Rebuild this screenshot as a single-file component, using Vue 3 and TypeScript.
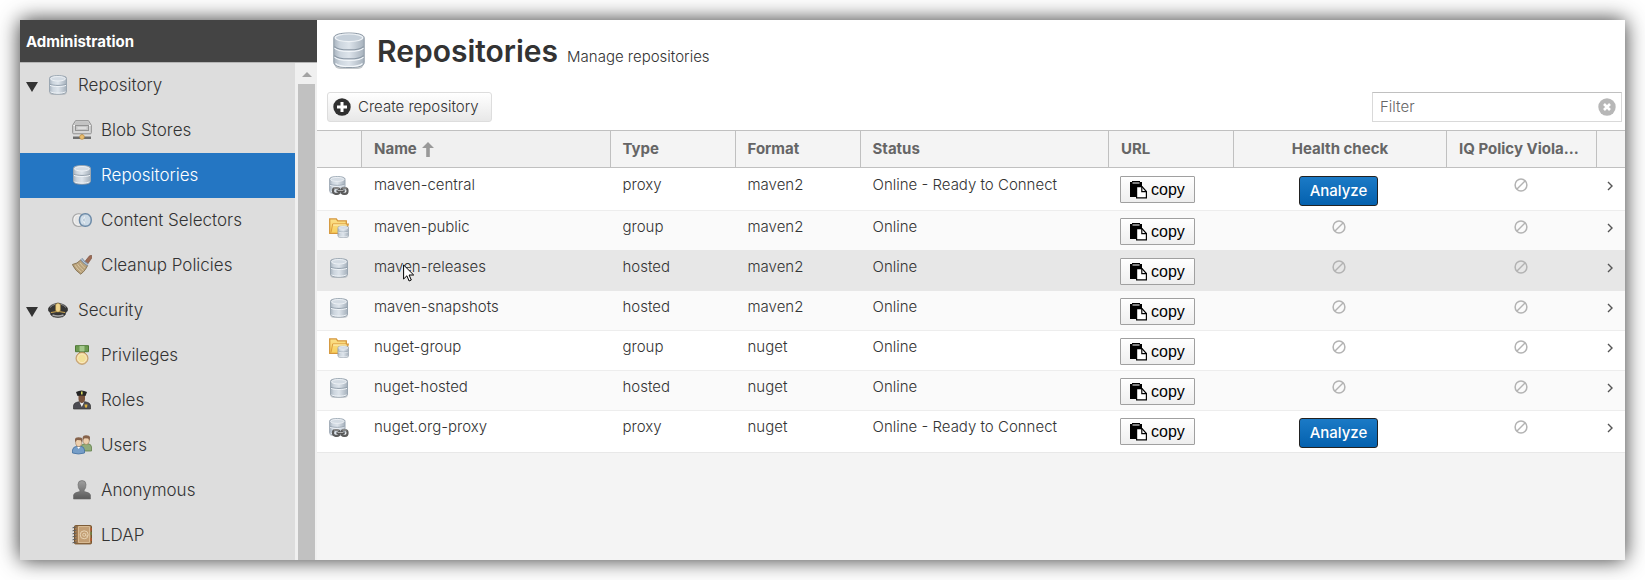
<script setup lang="ts">
import { ref } from 'vue'

interface NavItem {
  label: string
  icon: string
  group?: boolean
}

interface Repo {
  name: string
  type: 'proxy' | 'group' | 'hosted'
  format: string
  status: string
  analyze?: boolean
}

const nav: NavItem[] = [
  { label: 'Repository', icon: 'database', group: true },
  { label: 'Blob Stores', icon: 'drive' },
  { label: 'Repositories', icon: 'database' },
  { label: 'Content Selectors', icon: 'selectors' },
  { label: 'Cleanup Policies', icon: 'broom' },
  { label: 'Security', icon: 'cap', group: true },
  { label: 'Privileges', icon: 'medal' },
  { label: 'Roles', icon: 'officer' },
  { label: 'Users', icon: 'users' },
  { label: 'Anonymous', icon: 'person' },
  { label: 'LDAP', icon: 'book' },
]

const repos: Repo[] = [
  { name: 'maven-central', type: 'proxy', format: 'maven2', status: 'Online - Ready to Connect', analyze: true },
  { name: 'maven-public', type: 'group', format: 'maven2', status: 'Online' },
  { name: 'maven-releases', type: 'hosted', format: 'maven2', status: 'Online' },
  { name: 'maven-snapshots', type: 'hosted', format: 'maven2', status: 'Online' },
  { name: 'nuget-group', type: 'group', format: 'nuget', status: 'Online' },
  { name: 'nuget-hosted', type: 'hosted', format: 'nuget', status: 'Online' },
  { name: 'nuget.org-proxy', type: 'proxy', format: 'nuget', status: 'Online - Ready to Connect', analyze: true },
]

const selected = ref('Repositories')
const hovered = 'maven-releases'
const filter = ref('')
</script>

<template>
  <svg class="defs" aria-hidden="true">
    <defs>
      <linearGradient id="steel" x1="0" x2="1" y1="0" y2="0">
        <stop offset="0" stop-color="#a9b4bf" />
        <stop offset=".2" stop-color="#ccd5de" />
        <stop offset=".5" stop-color="#dde4eb" />
        <stop offset="1" stop-color="#a6b1bc" />
      </linearGradient>
      <linearGradient id="folder" x1="0" x2="0" y1="0" y2="1">
        <stop offset="0" stop-color="#fbe08a" />
        <stop offset="1" stop-color="#f8cf5c" />
      </linearGradient>
      <linearGradient id="shade" x1="0" x2="0" y1="0" y2="1">
        <stop offset="0" stop-color="#a0a0a0" />
        <stop offset="1" stop-color="#5a5a5a" />
      </linearGradient>
      <symbol id="database" viewBox="0 0 20 20">
        <rect x="1" y="1" width="18" height="19" rx="4" fill="#6b7783" opacity=".3" />
        <path d="M1.500 3.500C1.500 1.500 5 .6 10 .6s8.500.9 8.500 2.900v12.600c0 2-3.500 3-8.500 3s-8.500-1-8.500-3z" fill="url(#steel)" stroke="#9ba7b2" />
        <ellipse cx="10" cy="3.800" rx="7.500" ry="2.200" fill="#d3dbe3" stroke="#edf1f5" />
        <path d="M2 9.200c2 1.600 14 1.600 16 0" fill="none" stroke="#919eab" />
        <path d="M2 10.300c2 1.600 14 1.600 16 0M2.500 16.800c3 1.800 12 1.800 15 0" fill="none" stroke="#f0f4f8" />
      </symbol>
      <symbol id="hosted" viewBox="0 0 20 20"><use href="#database" /></symbol>
      <symbol id="database-large" viewBox="0 0 32 38">
        <rect x="1" y="3" width="30" height="34" rx="6" fill="#55606b" opacity=".35" />
        <path d="M.8 6C.8 2.500 7 1 16 1s15.200 1.500 15.200 5v24.500c0 3.500-6 5-15.200 5S.8 34 .8 30.500z" fill="url(#steel)" stroke="#8e9aa6" />
        <ellipse cx="16" cy="5.800" rx="13.800" ry="3.800" fill="#c6d0da" stroke="#eef2f6" stroke-width="1.200" />
        <path d="M1.500 14.500c3 4.500 26 4.500 29 0M1.500 23.500c3 4.500 26 4.500 29 0" fill="none" stroke="#8a97a4" stroke-width="1.200" />
        <path d="M1.500 16c3 4.500 26 4.500 29 0M1.500 25c3 4.500 26 4.500 29 0M2.500 31.500c4 4 23 4 27 0" fill="none" stroke="#f3f7fa" stroke-width="1.200" />
      </symbol>
      <symbol id="drive" viewBox="0 0 20 20">
        <path d="M3.500.7h13l2.800 4.500v7.600q0 1-1 1H1.700q-1 0-1-1V5.200z" fill="#d7d7d7" stroke="#8e8e8e" />
        <path d="M4 1.500h12l2 3.500H2z" fill="#c3c3c3" />
        <path d="M1.500 5.500h17" stroke="#fafafa" />
        <rect x="3.500" y="5.500" width="13" height="5" fill="#c6c6c6" stroke="#939393" />
        <path d="M5.500 8h9" stroke="#f4f4f4" />
        <path d="M9 14h2v3H9z" fill="#929292" />
        <path d="M1 16.500h18v2.500H1z" fill="#6e6e6e" />
        <circle cx="10" cy="17" r="2.400" fill="#e9bd70" stroke="#b98a3d" stroke-width=".6" />
      </symbol>
      <symbol id="selectors" viewBox="0 0 20 20">
        <rect x=".8" y="3.800" width="12" height="12.500" rx="5.500" fill="#e6e6e6" stroke="#a6a6a6" stroke-width="1.300" />
        <rect x="2" y="5" width="9.600" height="10.100" rx="4.500" fill="none" stroke="#f7f7f7" stroke-width=".8" />
        <rect x="7.500" y="3.800" width="11.700" height="12.500" rx="5.500" fill="#c5d8e8" fill-opacity=".75" stroke="#6d8ba8" stroke-width="1.500" />
        <path d="M12.300 6.500q1.500 3.500 0 7-3-3.500 0-7z" fill="#9bb1c5" stroke="#f2f7fb" stroke-width=".8" />
      </symbol>
      <symbol id="broom" viewBox="0 0 20 20">
        <path d="M17.500.8l2.200-.5.200 2.500-4.400 6.500-3-2.300z" fill="#9d6b54" stroke="#734c3b" stroke-width=".6" />
        <path d="M8.700 5q1.600 2.500 7 5.500l-1.800 3.200q-2.200 3.300-5.200 5.500Q3 15.500.3 9.500q5-.8 8.400-4.500z" fill="#b9a27c" stroke="#7b6848" stroke-width=".8" />
        <path d="M3 10.200q3 4.500 6.500 7M5.500 9.200q2.500 4 6 6.300M8 7.700q2 3.500 5 5.500" fill="none" stroke="#e1cfab" stroke-width=".8" />
        <path d="M9.300 3.800q2.500 4 6.500 6" fill="none" stroke="#8194a8" stroke-width="2.600" />
        <path d="M9.300 3.800q2.500 4 6.500 6" fill="none" stroke="#d4dde6" stroke-width=".8" />
      </symbol>
      <symbol id="cap" viewBox="0 0 20 20">
        <path d="M.3 9Q1.500 4.500 10 3q8.500 1.500 9.700 6 .3 2.500-2.300 4v1.500q-1.700 3-7.400 3t-7.400-3V13Q0 11.500.3 9z" fill="#363636" stroke="#1c1c1c" stroke-width=".5" />
        <path d="M2 7.500q2-2.500 5.500-3.300M12.500 4.200Q16 5 18 7.500" fill="none" stroke="#8b8b8b" />
        <path d="M3 12.500q7-2.200 14 0" fill="none" stroke="#d0a951" />
        <path d="M4.500 15q5.500 2 11 0" fill="none" stroke="#aaa" stroke-width="1.500" />
        <path d="M7.600 4.500L10 3l2.400 1.500v6L10 12.300l-2.400-1.800z" fill="#efd48d" stroke="#9e7c30" stroke-width=".5" />
      </symbol>
      <symbol id="medal" viewBox="0 0 20 20">
        <path d="M3.500.7h13v6h-13z" fill="#6d9a50" stroke="#4e7934" />
        <path d="M7.500 1h5v6h-5z" fill="#a3c78a" />
        <path d="M7 6.500h6v2H7z" fill="#496c38" />
        <circle cx="10" cy="13.300" r="6" fill="#e6c591" stroke="#b9935b" stroke-width=".9" />
        <circle cx="10" cy="13.300" r="4.400" fill="#f2e099" stroke="#fff1cb" stroke-width=".8" />
      </symbol>
      <symbol id="officer" viewBox="0 0 20 20">
        <path d="M1.500 19v-3.500Q2 12.500 7 11.800h6q5 .7 5.500 3.700V19z" fill="#4c4c52" stroke="#333" stroke-width=".7" />
        <path d="M6.500 5h6.500v4q0 3-3.200 4-3.300-1-3.300-4z" fill="#79533d" />
        <path d="M7.500 12l2.300 5 2.400-5-2.400 1.200z" fill="#f2f2f2" />
        <path d="M4 2q5.500-3 11 0l-1.500 4q-4-1.200-8 0z" fill="#252525" />
        <path d="M9 1.500h1.600v3H9z" fill="#d4d35d" />
        <path d="M12.500 14.500h3l-.4 2.500-1.100 1-1.100-1z" fill="#dcb13f" />
      </symbol>
      <symbol id="users" viewBox="0 0 20 20">
        <path d="M9 16v-4q.5-3 4-3.300h3q3.300.5 3.500 3.300v4z" fill="#91ab7a" stroke="#62814b" stroke-width=".8" />
        <path d="M11.200 2.500h6v4q-.5 3-3 3t-3-3z" fill="#eed0ae" stroke="#8c6a4a" stroke-width=".5" />
        <path d="M10.800 5V2q.2-1.600 3.200-1.700 3.800 0 4 2.200l-.3 3.500-1.500-2.500-3.500-.2z" fill="#86624a" />
        <path d="M.5 18v-3q.5-3.300 4.300-3.700h4q3.400.4 3.700 3.700v3q-6 2-12 0z" fill="#769ec8" stroke="#426f9e" stroke-width=".8" />
        <path d="M3.700 4.500h6v4.200q-.5 3-3 3t-3-3z" fill="#eed0ae" stroke="#8c6a4a" stroke-width=".5" />
        <path d="M3 7.300V4.200q.2-1.900 3.500-2 3.800 0 4 2.300l-.3 3-1.500-2.200-3.700-.3z" fill="#86624a" />
        <path d="M5.200 12l1.500 2 1.500-2z" fill="#fff" />
      </symbol>
      <symbol id="person" viewBox="0 0 20 20">
        <path d="M6 4.500Q6 .5 10 .5t4 4q0 4-1.800 5.600v1.500q5.800 1 6.300 3.400v4h-17v-4q.5-2.400 6.300-3.400v-1.500Q6 8.500 6 4.500z" fill="url(#shade)" stroke="#6a6a6a" stroke-width=".6" />
      </symbol>
      <symbol id="book" viewBox="0 0 20 20">
        <rect x="2.500" y=".6" width="17" height="18.300" rx="1" fill="#a27a4f" stroke="#77542e" />
        <path d="M6.500 1.500h11v16h-11z" fill="#c39f75" stroke="#e2c7a0" stroke-width=".8" />
        <circle cx="12.200" cy="9.800" r="4" fill="none" stroke="#e8d3b3" />
        <circle cx="12.200" cy="9.800" r="1.500" fill="none" stroke="#e8d3b3" stroke-width=".9" />
        <path d="M13.700 8.500v2.200q1.300 1.300 2.400-.5" fill="none" stroke="#e8d3b3" stroke-width=".8" />
        <path d="M.5 2.800l4-.8M.5 5.800l4-.8M.5 8.800l4-.8M.5 11.800l4-.8M.5 14.800l4-.8M.5 17.800l4-.8" stroke="#5d5d5d" />
        <path d="M19 3v2.500M19 13v3" stroke="#c2572c" stroke-width="1.200" />
        <path d="M19 7v3" stroke="#6b8d4b" stroke-width="1.200" />
      </symbol>
      <symbol id="proxy" viewBox="0 0 20 20">
        <use href="#database" width="18" height="18" x="-.7" />
        <rect x="4" y="12" width="6.500" height="5.800" rx="2.500" fill="none" stroke="#5c5c5c" stroke-width="2.200" />
        <rect x="12.500" y="12" width="6" height="5.800" rx="2.500" fill="none" stroke="#5c5c5c" stroke-width="2.200" />
        <path d="M5 12h5M13.500 12h4" stroke="#bbb" stroke-width=".9" />
        <path d="M7.500 14.900h8" stroke="#4c4c4c" stroke-width="2.400" />
        <path d="M8.500 14.600h6" stroke="#c8c8c8" stroke-width=".9" />
      </symbol>
      <symbol id="group" viewBox="0 0 20 20">
        <path d="M.7 15.300V.9h6.600l1.400 1.900h8.600v3.400h1.900l-2.400 9.100z" fill="url(#folder)" stroke="#d5973c" stroke-width="1.300" />
        <path d="M2 14.500l1.700-8.600h14" fill="none" stroke="#dc9d40" />
        <path d="M4.200 7h13" stroke="#fdf0bd" />
        <use href="#database" x="8" y="7.500" width="12.500" height="12.500" />
      </symbol>
      <symbol id="none" viewBox="0 0 14 14">
        <circle cx="7" cy="7" r="5.900" fill="none" stroke="currentColor" stroke-width="1.500" />
        <path d="M3 11l8-8" stroke="currentColor" stroke-width="1.500" />
      </symbol>
      <symbol id="paste" viewBox="0 0 18 18">
        <path d="M0 1h2V0h8v1h2v4H6v11H0z" fill="#000" />
        <path d="M2.500 2h7" stroke="#fff" />
        <path d="M6.600 5.600h5.400l4.400 4.900v6.400H6.600z" fill="#fff" stroke="#000" stroke-width="1.200" />
        <path d="M11.800 5.600v5.100h4.600" fill="none" stroke="#000" stroke-width="1.200" />
      </symbol>
    </defs>
  </svg>

  <div class="window">
    <aside class="sidebar">
      <h2 class="side-title">Administration</h2>
      <div class="side-body">
        <nav class="tree" aria-label="Administration">
          <a
            v-for="item in nav"
            :key="item.label"
            href="#"
            class="node"
            :class="{ group: item.group, active: item.label === selected }"
            @click.prevent="selected = item.label"
          >
            <svg v-if="item.group" class="toggle" viewBox="0 0 12 10"><path d="M0 0h12L6 10z" fill="#333" /></svg>
            <svg class="icon"><use :href="'#' + item.icon" /></svg>
            <span>{{ item.label }}</span>
          </a>
        </nav>
        <div class="scrollbar" aria-hidden="true">
          <svg class="up" viewBox="0 0 10 5"><path d="M5 0l5 5H0z" fill="#a3a3a3" /></svg>
          <div class="thumb"></div>
        </div>
      </div>
    </aside>

    <main class="main">
      <header class="head">
        <svg class="head-icon"><use href="#database-large" /></svg>
        <div class="head-text">
          <h1>Repositories</h1>
          <span>Manage repositories</span>
        </div>
      </header>

      <div class="toolbar">
        <button type="button" class="create">
          <svg viewBox="0 0 18 18">
            <circle cx="9" cy="9" r="8.700" fill="#2f2f2f" />
            <path d="M9 4v10M4 9h10" stroke="#fff" stroke-width="3" />
          </svg>
          Create repository
        </button>
        <div class="filter">
          <input v-model="filter" type="text" placeholder="Filter" aria-label="Filter" />
          <button type="button" aria-label="Clear filter" @click="filter = ''">
            <svg viewBox="0 0 18 18">
              <circle cx="9" cy="9" r="8.700" fill="#b7b7b7" />
              <path d="M6 6l6 6M12 6l-6 6" stroke="#fff" stroke-width="2.600" />
            </svg>
          </button>
        </div>
      </div>

      <table class="grid">
        <colgroup>
          <col class="c-icon" />
          <col class="c-name" />
          <col class="c-small" />
          <col class="c-small" />
          <col />
          <col class="c-small" />
          <col class="c-health" />
          <col class="c-iq" />
          <col class="c-go" />
        </colgroup>
        <thead>
          <tr>
            <th></th>
            <th class="sorted" aria-sort="ascending">
              Name
              <svg class="sort" viewBox="0 0 12 15"><path d="M6 0l6 6H7.800v9H4.200V6H0z" fill="#999" /></svg>
            </th>
            <th>Type</th>
            <th>Format</th>
            <th>Status</th>
            <th>URL</th>
            <th class="center">Health check</th>
            <th>IQ Policy Viola...</th>
            <th></th>
          </tr>
        </thead>
        <tbody>
          <tr v-for="repo in repos" :key="repo.name" :class="{ hover: repo.name === hovered, tall: repo.analyze }">
            <td class="pic"><svg class="icon"><use :href="'#' + repo.type" /></svg></td>
            <td>
              <span class="name">
                {{ repo.name }}
                <svg v-if="repo.name === hovered" class="cursor" viewBox="0 0 12 18" aria-hidden="true">
                  <path d="M.6 1v14l3.300-3.200 2.200 5.200 2.200-1-2.200-5h4.600z" fill="#fff" stroke="#000" />
                </svg>
              </span>
            </td>
            <td>{{ repo.type }}</td>
            <td>{{ repo.format }}</td>
            <td>{{ repo.status }}</td>
            <td class="action">
              <button type="button" class="copy"><svg viewBox="0 0 18 18"><use href="#paste" /></svg>copy</button>
            </td>
            <td class="center" :class="{ action: repo.analyze }">
              <button v-if="repo.analyze" type="button" class="analyze">Analyze</button>
              <svg v-else class="none"><use href="#none" /></svg>
            </td>
            <td class="center"><svg class="none"><use href="#none" /></svg></td>
            <td class="go">
              <svg viewBox="0 0 6 10"><path d="M1 1l4 4-4 4" fill="none" stroke="#555" stroke-width="1.400" /></svg>
            </td>
          </tr>
        </tbody>
      </table>
    </main>
  </div>
</template>

<style>
body {
  margin: 0;
  background: #fff;
}
</style>

<style scoped>
* {
  box-sizing: border-box;
}
.defs {
  position: absolute;
  width: 0;
  height: 0;
}
.window {
  display: flex;
  min-height: calc(100vh - 40px);
  margin: 20px;
  background: #f4f4f4;
  box-shadow: 0 0 20px rgba(0, 0, 0, 0.8);
  color: #333;
  font: 300 15px/20px Inter, "Liberation Sans", sans-serif;
}
button,
input {
  margin: 0;
  font: inherit;
  color: inherit;
}
.icon {
  display: block;
  flex: none;
  width: 20px;
  height: 20px;
}

.sidebar {
  display: flex;
  flex: none;
  flex-direction: column;
  width: 297px;
  background: #ddd;
}
.side-title {
  margin: 0;
  padding: 12px 6px 10px;
  border-bottom: 1px solid #b5b5b5;
  background: #444;
  color: #fff;
  font-size: 15px;
  font-weight: 700;
  line-height: 20px;
}
.side-body {
  display: flex;
  flex: 1;
}
.tree {
  flex: 1;
}
.node {
  display: flex;
  align-items: center;
  gap: 9px;
  height: 45px;
  padding: 0 0 2px 52px;
  color: #333;
  font-size: 17px;
  text-decoration: none;
}
.node.group {
  gap: 10px;
  padding-left: 6px;
}
.toggle {
  width: 12px;
  height: 10px;
  margin-top: 4px;
}
.node.active {
  background: #2476c3;
  color: #fff;
}
.scrollbar {
  display: flex;
  flex-direction: column;
  width: 22px;
  padding: 0 2px 0 3px;
  background: #f0f0f0;
}
.up {
  align-self: center;
  width: 10px;
  height: 5px;
  margin: 9px 0 7px;
}
.thumb {
  flex: 1;
  background: #c1c1c1;
}

.main {
  flex: 1;
  min-width: 0;
  background: #f4f4f4;
}
.head {
  display: flex;
  align-items: center;
  gap: 12px;
  height: 62px;
  padding-left: 16px;
  background: #fff;
}
.head-icon {
  width: 32px;
  height: 38px;
}
.head-text {
  display: flex;
  align-items: baseline;
  gap: 9px;
}
h1 {
  margin: 0;
  font-size: 30px;
  font-weight: 600;
  line-height: 36px;
}
.toolbar {
  display: flex;
  justify-content: space-between;
  padding: 10px 3px 8px 10px;
  background: #fff;
}
.create {
  display: flex;
  align-items: center;
  gap: 7px;
  height: 30px;
  padding: 0 12px 0 5px;
  border: 1px solid #ddd;
  border-radius: 3px;
  background: linear-gradient(#fff, #e8e8e8);
}
.create svg {
  width: 18px;
  height: 18px;
}
.filter {
  display: flex;
  align-items: center;
  width: 250px;
  height: 30px;
  padding: 0 5px 0 7px;
  border: 1px solid #d9d9d9;
  border-top-color: #c0c0c0;
  background: #fff;
}
.filter input {
  flex: 1;
  min-width: 0;
  padding: 0;
  border: 0;
  outline: 0;
  background: none;
}
.filter input::placeholder {
  color: #666;
  opacity: 1;
}
.filter button {
  display: flex;
  padding: 0;
  border: 0;
  background: none;
}
.filter svg {
  width: 18px;
  height: 18px;
}

.grid {
  width: 100%;
  border-spacing: 0;
  border-bottom: 1px solid #e8e8e8;
  table-layout: fixed;
}
.c-icon {
  width: 45px;
}
.c-name {
  width: 19%;
}
.c-small {
  width: 125px;
}
.c-health {
  width: 213px;
}
.c-iq {
  width: 150px;
}
.c-go {
  width: 28px;
}
th {
  height: 38px;
  padding: 0 12px;
  border: solid #c0c0c0;
  border-width: 1px 1px 1px 0;
  background: #f4f4f4;
  color: #666;
  font-weight: 700;
  text-align: left;
  white-space: nowrap;
}
th:last-child {
  border-right: 0;
}
th.sorted {
  background: #f0f0f0;
}
.sort {
  width: 12px;
  height: 15px;
  margin-left: 2px;
  vertical-align: -3px;
}
td {
  height: 40px;
  padding: 6px 12px 0;
  border-top: 1px solid #ededed;
  background: #fff;
  vertical-align: top;
  white-space: nowrap;
}
.tall td {
  height: 42px;
}
tr:nth-child(even) td {
  background: #fafafa;
}
tr:first-child td {
  border-top-color: #fff;
}
tr.hover td,
tr.hover + tr td {
  border-top-color: #e7e7e7;
}
tr.hover td {
  background: #e7e7e7;
}
td.pic {
  padding-top: 7px;
}
td.action {
  padding: 7px 11px 0;
}
th.center {
  text-align: center;
}
td.center {
  padding-right: 15px;
  text-align: center;
}
.name {
  position: relative;
}
.cursor {
  position: absolute;
  top: 7px;
  left: 29px;
  width: 12px;
  height: 18px;
}
.copy {
  display: flex;
  align-items: center;
  gap: 3px;
  height: 27px;
  padding: 0 9px;
  border: 1px solid #a0a0a0;
  border-radius: 1px;
  background: linear-gradient(#fff, #eee);
  color: #000;
  font: 16px/20px "Liberation Sans", sans-serif;
}
.copy svg {
  width: 18px;
  height: 18px;
}
.analyze {
  height: 30px;
  padding: 0 10px;
  border: 1px solid #222;
  border-radius: 3px;
  background: linear-gradient(#1b7ac6, #0461ae);
  color: #fff;
  font-weight: 500;
  vertical-align: top;
}
.none {
  width: 14px;
  height: 14px;
  margin-top: 3px;
  color: #b3b3b3;
  vertical-align: top;
}
td.go {
  padding-left: 10px;
}
.go svg {
  display: block;
  width: 6px;
  height: 10px;
  margin-top: 6px;
}
</style>
